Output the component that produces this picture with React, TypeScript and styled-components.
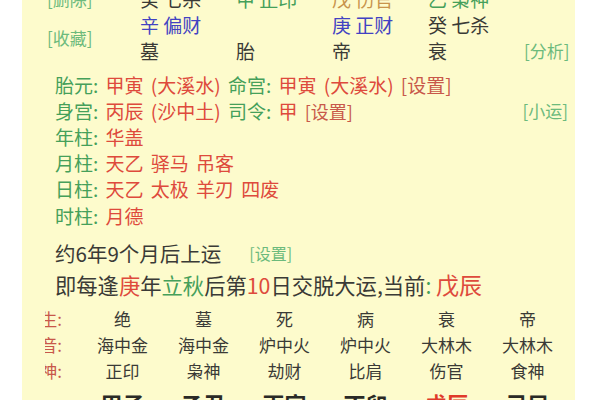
import React from "react";
import styled, { createGlobalStyle } from "styled-components";

const Global = createGlobalStyle`
  html, body { margin: 0; padding: 0; background: #ffffff; overflow: hidden; }
  body { width: 600px; height: 400px; font-family: "Noto Sans CJK SC", "Noto Sans", sans-serif; }
`;

const C = {
  bg: "#fdfbcc",
  dark: "#3a3a36",
  green: "#45a05a",
  lightGreen: "#6cba7c",
  red: "#de4a3c",
  setRed: "#c8584a",
  blue: "#4242c2",
  tan: "#c8944c",
};

const Panel = styled.div`
  margin-left: 22px;
  margin-top: -15px;
  width: 553px;
  height: 430px;
  background: ${C.bg};
  overflow: hidden;
`;

const TopGrid = styled.div`
  display: grid;
  grid-template-columns: 118px repeat(4, 96px) 1fr;
  grid-auto-rows: 26px;
  align-items: center;
`;

const SideTag = styled.div`
  grid-column: 1;
  padding-left: 25px;
  font-size: 17px;
  color: ${C.lightGreen};
  white-space: nowrap;
`;

const Cell = styled.div<{ $color: string; $col: number }>`
  grid-column: ${(p) => p.$col};
  font-size: 19px;
  color: ${(p) => p.$color};
  white-space: nowrap;
`;

const RightTag = styled.div`
  grid-column: 6;
  justify-self: end;
  padding-right: 7px;
  font-size: 17px;
  color: ${C.lightGreen};
  white-space: nowrap;
`;

const Lines = styled.div`
  margin-top: 8px;
  padding-left: 33px;
  padding-right: 7px;
  display: flex;
  flex-direction: column;
`;

const Line = styled.div`
  height: 26.2px;
  display: flex;
  align-items: center;
  justify-content: space-between;
  font-size: 19px;
  word-spacing: 3px;
  white-space: nowrap;
`;

const Label = styled.span`
  color: ${C.green};
`;

const Val = styled.span<{ $color?: string; $size?: number }>`
  color: ${(p) => p.$color || C.red};
  font-size: ${(p) => (p.$size ? `${p.$size}px` : "inherit")};
`;

const SideLink = styled.span`
  font-size: 17px;
  color: ${C.lightGreen};
`;

const BigLine = styled.div<{ $gap: number; $size: number }>`
  margin-top: ${(p) => p.$gap}px;
  height: 30px;
  display: flex;
  align-items: center;
  gap: 28px;
  font-size: ${(p) => p.$size}px;
  color: ${C.dark};
  white-space: nowrap;
`;

const SmallSet = styled.span`
  font-size: 16px;
  color: ${C.lightGreen};
`;

const Table = styled.div`
  margin-top: 6px;
  display: grid;
  grid-template-columns: 60px repeat(6, 81px);
  grid-auto-rows: 26px;
  align-items: center;
`;

const RowLabel = styled.div`
  margin-left: 23px;
  width: 17px;
  overflow: hidden;
  display: flex;
  justify-content: flex-end;
  font-size: 17px;
  color: ${C.setRed};
  white-space: nowrap;
`;

const TCell = styled.div`
  text-align: center;
  font-size: 17px;
  color: ${C.dark};
  white-space: nowrap;
`;

const GanZhi = styled.div<{ $red?: boolean }>`
  align-self: start;
  padding-top: 5px;
  text-align: center;
  font-size: 22px;
  line-height: 30px;
  font-weight: 700;
  color: ${(p) => (p.$red ? "#e03a2a" : "#2a2a26")};
  white-space: nowrap;
`;

const Spacer = styled.div``;

const cols = [2, 3, 4, 5];

const topRows: { t: string; c: string }[][] = [
  [
    { t: "癸 七杀", c: C.dark },
    { t: "甲 正印", c: C.green },
    { t: "戊 伤官", c: C.tan },
    { t: "乙 枭神", c: C.green },
  ],
  [
    { t: "辛 偏财", c: C.blue },
    { t: "", c: C.dark },
    { t: "庚 正财", c: C.blue },
    { t: "癸 七杀", c: C.dark },
  ],
  [
    { t: "墓", c: C.dark },
    { t: "胎", c: C.dark },
    { t: "帝", c: C.dark },
    { t: "衰", c: C.dark },
  ],
];

const tableRows = [
  { label: "长生:", cells: ["绝", "墓", "死", "病", "衰", "帝"] },
  { label: "纳音:", cells: ["海中金", "海中金", "炉中火", "炉中火", "大林木", "大林木"] },
  { label: "十神:", cells: ["正印", "枭神", "劫财", "比肩", "伤官", "食神"] },
];

const ganzhi = ["甲子", "乙丑", "丙寅", "丁卯", "戊辰", "己巳"];

export default function App() {
  return (
    <>
      <Global />
      <Panel>
        <TopGrid>
          <SideTag style={{ gridRow: 1 }}>[删除]</SideTag>
          {topRows[0].map((c, i) => (
            <Cell key={"a" + i} $col={cols[i]} $color={c.c} style={{ gridRow: 1 }}>
              {c.t}
            </Cell>
          ))}
          <SideTag style={{ gridRow: "2 / span 2" }}>[收藏]</SideTag>
          {topRows[1].map((c, i) => (
            <Cell key={"b" + i} $col={cols[i]} $color={c.c} style={{ gridRow: 2 }}>
              {c.t}
            </Cell>
          ))}
          {topRows[2].map((c, i) => (
            <Cell key={"c" + i} $col={cols[i]} $color={c.c} style={{ gridRow: 3 }}>
              {c.t}
            </Cell>
          ))}
          <RightTag style={{ gridRow: 3 }}>[分析]</RightTag>
        </TopGrid>

        <Lines>
          <Line>
            <span>
              <Label>胎元: </Label>
              <Val>甲寅 (大溪水) </Val>
              <Label>命宫: </Label>
              <Val>甲寅 (大溪水) </Val>
              <Val $color={C.setRed}>[设置]</Val>
            </span>
          </Line>
          <Line>
            <span>
              <Label>身宫: </Label>
              <Val>丙辰 (沙中土) </Val>
              <Label>司令: </Label>
              <Val>甲 </Val>
              <Val $color={C.setRed} $size={18}>[设置]</Val>
            </span>
            <SideLink>[小运]</SideLink>
          </Line>
          <Line>
            <span>
              <Label>年柱: </Label>
              <Val>华盖</Val>
            </span>
          </Line>
          <Line>
            <span>
              <Label>月柱: </Label>
              <Val>天乙 驿马 吊客</Val>
            </span>
          </Line>
          <Line>
            <span>
              <Label>日柱: </Label>
              <Val>天乙 太极 羊刃 四废</Val>
            </span>
          </Line>
          <Line>
            <span>
              <Label>时柱: </Label>
              <Val>月德</Val>
            </span>
          </Line>
          <BigLine $gap={10} $size={20.5}>
            <span>约6年9个月后上运</span>
            <SmallSet>[设置]</SmallSet>
          </BigLine>
          <BigLine $gap={1} $size={21.3}>
            <span>
              即每逢<Val $color={C.red}>庚</Val>年<Val $color={C.green}>立秋</Val>后第
              <Val $color={C.red}>10</Val>日交脱大运,当前
              <Val $color={C.green}>: </Val>
              <Val $color={C.red} $size={23}>戊辰</Val>
            </span>
          </BigLine>
        </Lines>

        <Table>
          {tableRows.map((r) => (
            <React.Fragment key={r.label}>
              <RowLabel>{r.label}</RowLabel>
              {r.cells.map((c, i) => (
                <TCell key={i}>{c}</TCell>
              ))}
            </React.Fragment>
          ))}
          <Spacer />
          {ganzhi.map((g, i) => (
            <GanZhi key={g} $red={i === 4}>
              {g}
            </GanZhi>
          ))}
        </Table>
      </Panel>
    </>
  );
}
